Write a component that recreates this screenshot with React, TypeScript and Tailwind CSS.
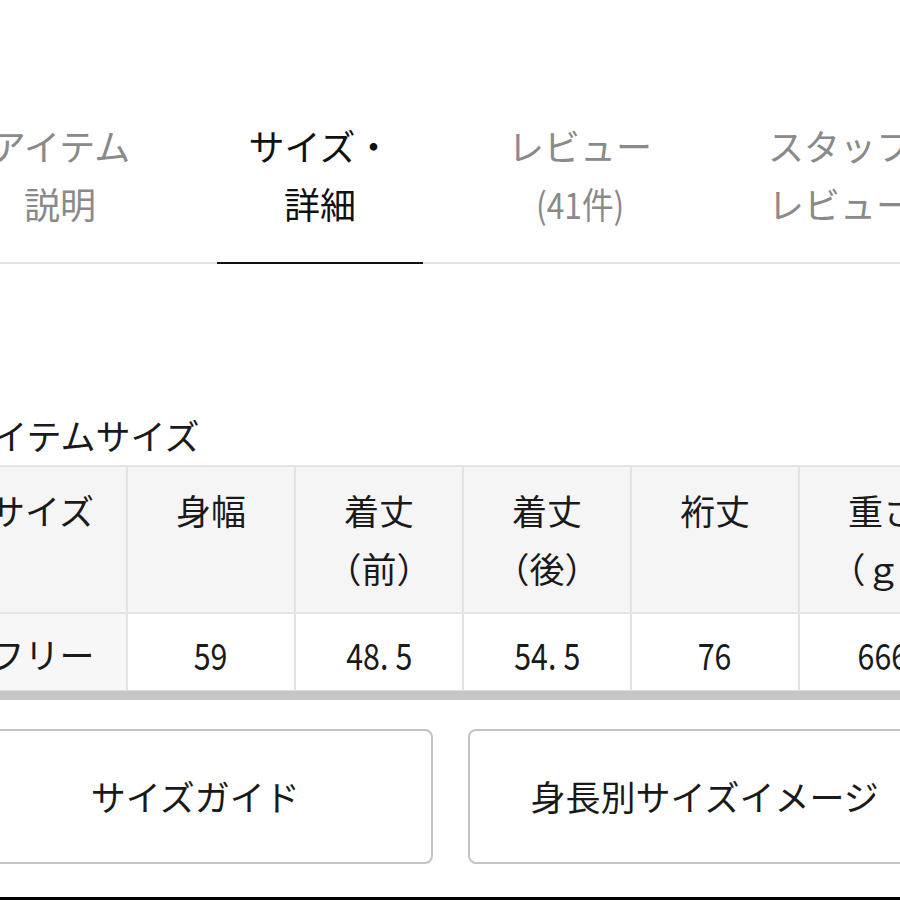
import React from "react";

const tabs = [
  { l1: "アイテム", l2: "説明", active: false, narrow: false },
  { l1: "サイズ・", l2: "詳細", active: true, narrow: false },
  { l1: "レビュー", l2: "(41件)", active: false, narrow: true },
  { l1: "スタッフ", l2: "レビュー", active: false, narrow: false },
];

const headers: [string, string][] = [
  ["サイズ", ""],
  ["身幅", ""],
  ["着丈", "（前）"],
  ["着丈", "（後）"],
  ["裄丈", ""],
  ["重さ", "（ｇ）"],
];

function Num({ v }: { v: string }) {
  const parts = v.split(".");
  return (
    <span className="inline-block scale-x-[0.82] text-[37px]">
      {parts[0]}
      {parts.length > 1 && (
        <>
          <span className="inline-block w-[19px] text-left">.</span>
          {parts[1]}
        </>
      )}
    </span>
  );
}

const values = ["フリー", "59", "48.5", "54.5", "76", "666"];

export default function App() {
  return (
    <div
      className="relative h-[900px] w-[900px] overflow-hidden bg-white text-[#1a1a1a]"
      style={{ fontFamily: '"Noto Sans CJK JP", "Noto Sans", sans-serif' }}
    >
      {/* Tabs */}
      <div className="mt-[116px] flex w-[1040px] -ml-[70px] border-b-2 border-[#e4e4e4]">
        {tabs.map((t, i) => (
          <div key={i} className="w-[260px] shrink-0 px-[27px]">
            <div
              className={
                "-mb-[2px] pb-[30px] text-center text-[36px] leading-[58px] " +
                (t.active
                  ? "border-b-2 border-[#111] text-[#111]"
                  : "border-b-2 border-transparent text-[#8a8a8a]")
              }
            >
              <div className="whitespace-nowrap">{t.l1}</div>
              <div className="whitespace-nowrap">
                {t.narrow ? (
                  <span className="inline-block scale-x-[0.88]">{t.l2}</span>
                ) : (
                  t.l2
                )}
              </div>
            </div>
          </div>
        ))}
      </div>

      {/* Heading */}
      <div className="-ml-[41px] mt-[149px] text-[35px] leading-[44px] whitespace-nowrap">
        アイテムサイズ
      </div>

      {/* Table */}
      <div className="mt-[8px] -ml-[42px] w-[1008px]">
        <div className="grid grid-cols-6 border-t-2 border-[#e4e4e4]">
          {headers.map((h, i) => (
            <div
              key={i}
              className={
                "h-[145px] bg-[#f5f5f5] py-[14px] text-center text-[35px] leading-[58px] " +
                (i > 0 ? "border-l-2 border-[#e4e4e4]" : "")
              }
            >
              <div className="whitespace-nowrap">{h[0]}</div>
              {h[1] && <div className="whitespace-nowrap">{h[1]}</div>}
            </div>
          ))}
        </div>
        <div className="grid grid-cols-6 border-t-2 border-[#e4e4e4]">
          {values.map((v, i) => (
            <div
              key={i}
              className={
                "flex h-[76px] items-center justify-center pt-[3px] text-[35px] leading-[44px] " +
                (i === 0 ? "bg-[#f7f7f7]" : "border-l-2 border-[#e4e4e4] bg-white")
              }
            >
              {i === 0 ? <span className="whitespace-nowrap">{v}</span> : <Num v={v} />}
            </div>
          ))}
        </div>
        <div className="h-[10px] border-t border-[#dcdcdc] bg-[#c6c6c6]" />
      </div>

      {/* Buttons */}
      <div className="-ml-[42px] mt-[29px] flex w-[984px] gap-[35px]">
        <div className="flex h-[135px] flex-1 items-center justify-center rounded-[8px] border-2 border-[#c4c4c4] bg-white text-[35px] whitespace-nowrap">
          サイズガイド
        </div>
        <div className="flex h-[135px] flex-1 items-center justify-center rounded-[8px] border-2 border-[#c4c4c4] bg-white text-[35px] whitespace-nowrap">
          身長別サイズイメージ
        </div>
      </div>

      {/* Bottom bar */}
      <div className="absolute bottom-0 left-0 h-[3px] w-full bg-black" />
    </div>
  );
}
